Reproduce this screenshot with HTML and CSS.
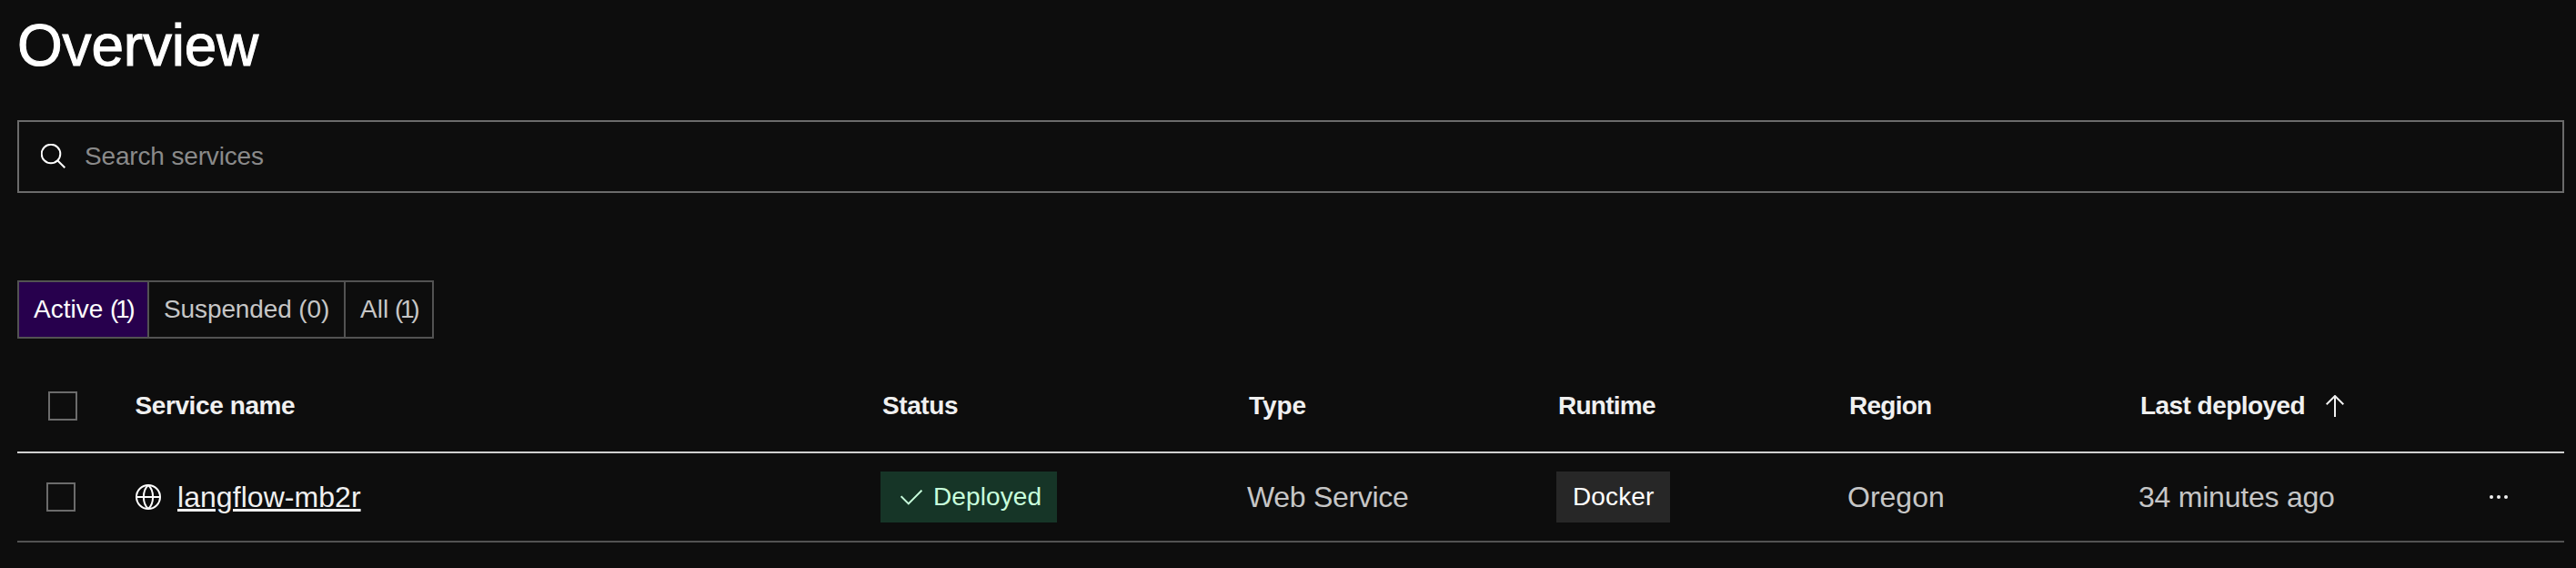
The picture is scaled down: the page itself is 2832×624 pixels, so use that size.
FILE: index.html
```html
<!DOCTYPE html>
<html lang="en">
<head>
<meta charset="utf-8">
<title>Overview</title>
<link rel="stylesheet" href="styles.css">
</head>
<body>
<main class="page">
  <h1 class="title">Overview</h1>
  <label class="search">
    <svg class="search-icon" viewBox="0 0 28 28"><circle cx="11" cy="11" r="10.3"/><path d="M18.2 18.2 26.3 26.3"/></svg>
    <input class="search-input" type="text" placeholder="Search services">
  </label>
  <nav class="tabs">
    <button class="tab tab-active">Active <span class="count">(1)</span></button>
    <button class="tab tab-suspended">Suspended (0)</button>
    <button class="tab tab-all">All <span class="count">(1)</span></button>
  </nav>
  <section class="table">
    <div class="row head">
      <span class="checkbox"></span>
      <span class="col-name">Service name</span>
      <span class="col-status">Status</span>
      <span class="col-type">Type</span>
      <span class="col-runtime">Runtime</span>
      <span class="col-region">Region</span>
      <span class="sort"><span class="col-last">Last deployed</span>
        <svg class="arrow" viewBox="0 0 20 24"><path d="M10 24V1M.7 10.3 10 1l9.3 9.3"/></svg>
      </span>
      <span></span>
    </div>
    <div class="row item">
      <span class="checkbox"></span>
      <span class="service">
        <svg class="globe" viewBox="0 0 28 28"><circle cx="14" cy="14" r="13"/><path d="M1 14h26M14 1C7.200 7 7.200 21 14 27M14 1c6.800 6 6.800 20 0 26"/></svg>
        <a class="link" href="#">langflow-mb2r</a>
      </span>
      <span><span class="badge deployed">
        <svg class="check" viewBox="0 0 24 17"><path d="M.6 7.200 8.800 15.400 23.400.7"/></svg>Deployed</span></span>
      <span class="type">Web Service</span>
      <span><span class="badge docker">Docker</span></span>
      <span class="region">Oregon</span>
      <span class="ago">34 minutes ago</span>
      <svg class="more" viewBox="0 0 20 4"><circle cx="2" cy="2" r="2"/><circle cx="10" cy="2" r="2"/><circle cx="18" cy="2" r="2"/></svg>
    </div>
  </section>
</main>
</body>
</html>
```
FILE: styles.css
```css
* { box-sizing: border-box; }
body {
  margin: 0;
  background: #0d0d0d;
  color: #c6c6c6;
  font-family: "Liberation Sans", Arial, sans-serif;
  font-size: 28px;
}
.page { height: 624px; padding: 0 13px 0 19px; overflow: hidden; }
svg { display: block; flex: none; fill: none; stroke: currentColor; stroke-width: 2; }
.title {
  margin: 0 0 32px;
  font-size: 64px;
  line-height: 100px;
  font-weight: 400;
  letter-spacing: -0.2px;
  color: #fff;
  -webkit-text-stroke: 1px #fff;
}
.search {
  display: flex;
  align-items: center;
  height: 80px;
  padding-left: 24px;
  border: 2px solid #6b6b6b;
  margin-bottom: 96px;
  color: #fff;
}
.search-icon { width: 28px; height: 28px; margin-right: 20px; }
.search-input {
  flex: 1;
  border: 0;
  padding: 0;
  outline: 0;
  background: none;
  font: inherit;
  letter-spacing: -0.16px;
  color: #fff;
}
.search-input::placeholder { color: #8a8a8a; opacity: 1; }
.tabs { display: flex; margin-bottom: 24px; }
.tab {
  height: 64px;
  padding: 0 0 0 16px;
  border: 2px solid #525252;
  border-left-width: 0;
  border-radius: 0;
  background: none;
  color: #c6c6c6;
  font: inherit;
  text-align: left;
  white-space: nowrap;
}
.tab-active { width: 145px; border-left-width: 2px; background: #27004d; color: #fff; }
.tab-suspended { width: 216px; letter-spacing: -0.11px; }
.tab-all { width: 97px; }
.count { letter-spacing: -3.3px; }
.tab-all .count { margin-left: -1px; }
.row {
  display: grid;
  align-items: center;
  white-space: nowrap;
}
.head {
  grid-template-columns: 95.5px 821.5px 403px 340px 320px 320px 384px 1fr;
  height: 102px;
  padding-left: 34px;
  border-bottom: 2px solid #cfcfcf;
  color: #f0f0f0;
  font-weight: 700;
}
.item {
  grid-template-columns: 98px 819px 403px 339px 321px 320px 386px 1fr;
  height: 98px;
  padding-left: 32px;
  border-bottom: 2px solid #525252;
  font-size: 32px;
}
.checkbox { width: 32px; height: 32px; border: 2px solid #6b6b6b; }
.col-name { letter-spacing: -0.4px; }
.col-status { letter-spacing: -0.4px; }
.col-type { letter-spacing: -0.07px; }
.col-runtime { letter-spacing: -0.74px; }
.col-region { letter-spacing: -0.75px; }
.col-last { letter-spacing: -0.55px; }
.sort { display: flex; align-items: center; gap: 23px; }
.arrow { width: 20px; height: 24px; }
.service { display: flex; align-items: center; gap: 18px; }
.globe { width: 28px; height: 28px; color: #fff; }
.link {
  color: #f0f0f0;
  letter-spacing: 0.05px;
  text-decoration: underline;
  text-decoration-thickness: 3px;
  text-underline-offset: 2px;
}
.badge { display: flex; align-items: center; width: max-content; height: 56px; font-size: 28px; }
.deployed { width: 194px; padding-left: 22px; gap: 12px; background: #163527; color: #c8ffdc; letter-spacing: 0.1px; }
.check { width: 24px; height: 17px; }
.docker { width: 125px; margin-left: 1px; padding-left: 18px; background: #272727; color: #fff; letter-spacing: 0.12px; }
.type { letter-spacing: -0.3px; }
.ago { letter-spacing: -0.23px; }
.more { width: 20px; height: 4px; fill: #f0f0f0; stroke: none; }
```
